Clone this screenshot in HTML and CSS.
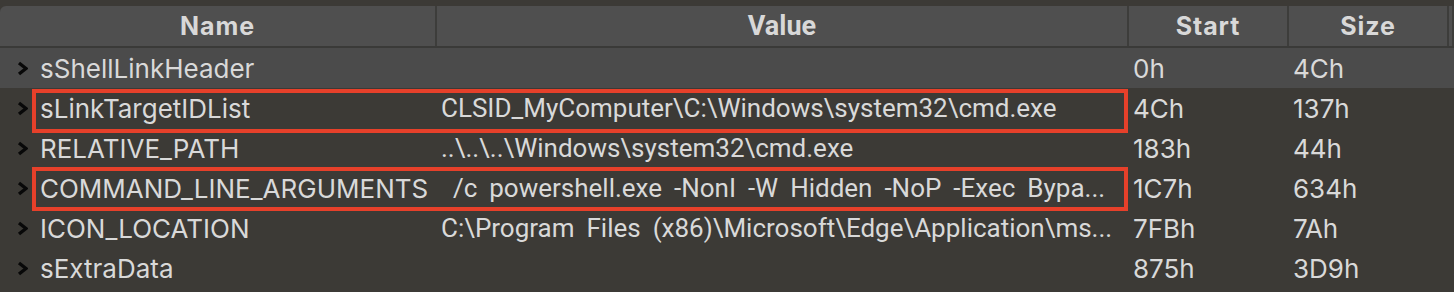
FILE: index.html
```html
<!DOCTYPE html>
<html lang="en">
<head>
<meta charset="utf-8">
<title>Template results</title>
<link rel="stylesheet" href="styles.css">
</head>
<body>
<div class="panel">
  <div class="grid head">
    <div class="hcell">Name</div>
    <div class="hcell value-head">Value</div>
    <div class="hcell">Start</div>
    <div class="hcell">Size</div>
    <div class="hcell"></div>
  </div>
  <div class="grid row hover">
    <div class="cell name"><svg class="chev" viewBox="0 0 11 15"><path d="M2 2 L9 7.5 L2 13"/></svg><span>sShellLinkHeader</span></div>
    <div class="cell val"></div>
    <div class="cell">0h</div>
    <div class="cell">4Ch</div>
    <div class="cell">struct</div>
  </div>
  <div class="grid row mark mark-a">
    <div class="cell name"><svg class="chev" viewBox="0 0 11 15"><path d="M2 2 L9 7.5 L2 13"/></svg><span>sLinkTargetIDList</span></div>
    <div class="cell val">CLSID_MyComputer\C:\Windows\system32\cmd.exe</div>
    <div class="cell">4Ch</div>
    <div class="cell">137h</div>
    <div class="cell">struct</div>
  </div>
  <div class="grid row">
    <div class="cell name"><svg class="chev" viewBox="0 0 11 15"><path d="M2 2 L9 7.5 L2 13"/></svg><span>RELATIVE_PATH</span></div>
    <div class="cell val">..\..\..\Windows\system32\cmd.exe</div>
    <div class="cell">183h</div>
    <div class="cell">44h</div>
    <div class="cell">struct</div>
  </div>
  <div class="grid row mark mark-b">
    <div class="cell name"><svg class="chev" viewBox="0 0 11 15"><path d="M2 2 L9 7.5 L2 13"/></svg><span>COMMAND_LINE_ARGUMENTS</span></div>
    <div class="cell val"> /c powershell.exe -NonI -W Hidden -NoP -Exec Bypa...</div>
    <div class="cell">1C7h</div>
    <div class="cell">634h</div>
    <div class="cell">struct</div>
  </div>
  <div class="grid row">
    <div class="cell name"><svg class="chev" viewBox="0 0 11 15"><path d="M2 2 L9 7.5 L2 13"/></svg><span>ICON_LOCATION</span></div>
    <div class="cell val">C:\Program Files (x86)\Microsoft\Edge\Application\ms...</div>
    <div class="cell">7FBh</div>
    <div class="cell">7Ah</div>
    <div class="cell">struct</div>
  </div>
  <div class="grid row">
    <div class="cell name"><svg class="chev" viewBox="0 0 11 15"><path d="M2 2 L9 7.5 L2 13"/></svg><span>sExtraData</span></div>
    <div class="cell val"></div>
    <div class="cell">875h</div>
    <div class="cell">3D9h</div>
    <div class="cell">struct</div>
  </div>
</div>
</body>
</html>
```

FILE: styles.css
```css
html, body {
  margin: 0;
  padding: 0;
  background: #3c3a36;
  overflow: hidden;
}

body {
  width: 1454px;
  height: 292px;
  font-family: Inter, "Noto Sans", sans-serif;
  color: #d9d9d9;
}

.panel {
  padding-top: 6px;
}

.grid {
  display: grid;
  grid-template-columns: 437px 692px 160px 160px 1fr;
}

.head {
  height: 40px;
  background: #4f4f4f;
  border-radius: 6px 0 0 0;
  border-bottom: 2px solid #3a3a38;
}

.hcell {
  display: flex;
  align-items: center;
  justify-content: center;
  border-right: 2px solid #3d3d3b;
  font-weight: 700;
  font-size: 25px;
  color: #d8d8d8;
  letter-spacing: 0.9px;
}

.value-head {
  font-family: Roboto, sans-serif;
  font-size: 27px;
  letter-spacing: 0;
}

.row {
  position: relative;
  height: 40px;
  font-size: 26px;
}

.row.hover {
  background: #4b4b4b;
}

.cell {
  display: flex;
  align-items: center;
  padding-left: 4px;
  white-space: pre;
  overflow: hidden;
  min-width: 0;
}

.cell.name {
  padding-left: 17px;
  gap: 12px;
}

.chev {
  width: 11px;
  height: 15px;
  flex: none;
}

.chev path {
  fill: none;
  stroke: #080808;
  stroke-width: 3.4;
  stroke-linejoin: miter;
}

.cell.val {
  display: block;
  line-height: 40px;
  font-family: Roboto, sans-serif;
  font-size: 26px;
  word-spacing: 5.5px;
  text-overflow: ellipsis;
  padding-right: 14px;
}

.mark::after {
  content: "";
  position: absolute;
  left: 32px;
  width: 1096px;
  height: 44px;
  box-sizing: border-box;
  border: 4px solid #e6402a;
  pointer-events: none;
}

.mark-a::after {
  top: 1px;
}

.mark-b::after {
  top: -1px;
}
```
